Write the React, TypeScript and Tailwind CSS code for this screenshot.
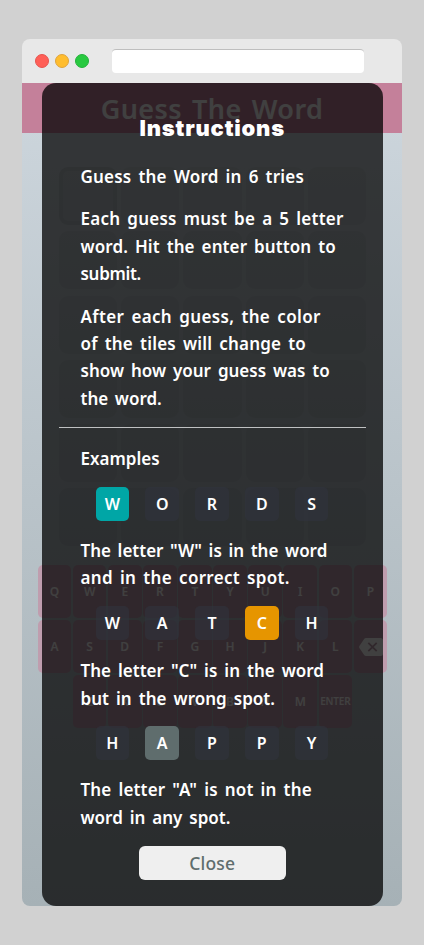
import React from 'react';

type Line = { text: string; spacing: string };

function Paragraph({ lines, className = '' }: { lines: Line[]; className?: string }) {
  return (
    <p className={`pl-[22px] text-[17px] font-semibold leading-[27.3px] text-white ${className}`}>
      {lines.map((line) => (
        <span key={line.text} className={`block whitespace-nowrap ${line.spacing}`}>
          {line.text}
        </span>
      ))}
    </p>
  );
}

function Example({ word, active, color, className = '' }: { word: string; active: number; color: string; className?: string }) {
  return (
    <div className={`ml-[37px] flex h-[34px] gap-[16px] ${className}`}>
      {word.split('').map((letter, i) => (
        <div
          key={i}
          className={`flex w-[33.8px] items-center justify-center rounded-[5px] text-[16px] font-semibold text-white ${
            i === active ? color : 'bg-[#30343d]/60'
          }`}
        >
          {letter}
        </div>
      ))}
    </div>
  );
}

function Key({ label }: { label: string }) {
  return (
    <div className="flex h-[53.3px] w-[33.6px] items-center justify-center rounded-[5px] bg-[#bf9dae] pt-px text-[12px] font-semibold text-white">
      {label === 'DEL' ? (
        <svg viewBox="0 0 24 18" className="ml-[1px] h-[18px] w-[24px] shrink-0">
          <path d="M7 0H21.5Q24 0 24 2.5V15.5Q24 18 21.5 18H7Q6 18 5.3 17.2L.4 10Q-.1 9 .4 8L5.3.8Q6 0 7 0Z" fill="#fff" />
          <path d="M9.3 4.8L17.7 13.2M17.7 4.8L9.3 13.2" stroke="#bf9dae" strokeWidth="1.8" />
        </svg>
      ) : (
        <span className={label === 'ENTER' ? 'text-[10px] tracking-[-0.2px]' : ''}>{label}</span>
      )}
    </div>
  );
}

const keyRows = ['Q W E R T Y U I O P', 'A S D F G H J K L DEL', 'Z X C V B N M ENTER'];

export default function App() {
  return (
    <div className="h-[945px] w-[424px] overflow-hidden bg-[#d1d1d1] px-[22px] pt-[39px] font-['Noto_Sans','Liberation_Sans',sans-serif]">
      <div className="flex h-[867px] w-[380px] flex-col overflow-hidden rounded-[8px]">
        <div className="flex h-[44px] shrink-0 items-center gap-[6px] bg-[#e8e8e8] pl-[13px]">
          <span className="size-[14px] rounded-full border border-[#e6544f] bg-[#ff5f57]" />
          <span className="size-[14px] rounded-full border border-[#dfa43b] bg-[#ffbd2e]" />
          <span className="size-[14px] rounded-full border border-[#24b23b] bg-[#28c940]" />
          <span className="ml-[17px] h-[24px] w-[252px] rounded-[4px] border-t border-[#bebebe] bg-white" />
        </div>

        <div className="relative flex-1 bg-linear-to-b from-[#cdd6dd] to-[#a6b1b6]">
          <h1 className="flex h-[50px] items-center justify-center bg-[#c4809a] pt-[2px] text-[27px] font-semibold text-white tracking-[0.4px] [word-spacing:2.7px]">
            Guess The Word
          </h1>
          <div className="mt-[34px] ml-[37px] grid w-[307px] grid-cols-5 gap-x-[4.2px] gap-y-[6.3px]">
            {Array.from({ length: 30 }, (_, i) => (
              <div
                key={i}
                className={`h-[58px] rounded-[9px] bg-black/4 ${i === 0 ? 'border-4 border-black/4' : ''}`}
              />
            ))}
          </div>
          <div className="mt-[18.5px] flex flex-col items-center gap-[1.5px]">
            {keyRows.map((row) => (
              <div key={row} className="ml-px flex gap-[1.5px]">
                {row.split(' ').map((key) => (
                  <Key key={key} label={key} />
                ))}
              </div>
            ))}
          </div>

          <div className="absolute inset-y-0 left-[19.5px] w-[341.5px] rounded-[14px] bg-black/75 px-[17px]">
            <h2 className="mt-[31px] h-[28px] text-center font-['Inter','Noto_Sans',sans-serif] text-[22px] leading-[28px] font-black tracking-[0.8px] text-white">
              Instructions
            </h2>
            <Paragraph
              className="mt-[20.7px]"
              lines={[{ text: 'Guess the Word in 6 tries', spacing: 'tracking-[0.2px] [word-spacing:2.4px]' }]}
            />
            <Paragraph
              className="mt-[15.5px]"
              lines={[
                { text: 'Each guess must be a 5 letter', spacing: 'tracking-[0.25px] [word-spacing:2.3px]' },
                { text: 'word. Hit the enter button to', spacing: 'tracking-[0.1px] [word-spacing:2.4px]' },
                { text: 'submit.', spacing: 'tracking-[-0.3px]' },
              ]}
            />
            <Paragraph
              className="mt-[15.5px]"
              lines={[
                { text: 'After each guess, the color', spacing: 'tracking-[0.35px] [word-spacing:2.4px]' },
                { text: 'of the tiles will change to', spacing: 'tracking-[0.2px] [word-spacing:2.4px]' },
                { text: 'show how your guess was to', spacing: '[word-spacing:2.5px]' },
                { text: 'the word.', spacing: '[word-spacing:2.2px]' },
              ]}
            />
            <hr className="mt-[14.8px] border-[#bfc1c2]" />
            <Paragraph className="mt-[17px]" lines={[{ text: 'Examples', spacing: '' }]} />
            <Example className="mt-[14.5px]" word="WORDS" active={0} color="bg-[#00a6a6]" />
            <Paragraph
              className="mt-[16.5px]"
              lines={[
                { text: 'The letter "W" is in the word', spacing: '[word-spacing:2.2px]' },
                { text: 'and in the correct spot.', spacing: 'tracking-[0.3px] [word-spacing:2.4px]' },
              ]}
            />
            <Example className="mt-[14.5px]" word="WATCH" active={3} color="bg-[#e69500]" />
            <Paragraph
              className="mt-[17px]"
              lines={[
                { text: 'The letter "C" is in the word', spacing: '[word-spacing:2.6px]' },
                { text: 'but in the wrong spot.', spacing: '[word-spacing:2.7px]' },
              ]}
            />
            <Example className="mt-[14.5px]" word="HAPPY" active={1} color="bg-[#5f6d6d]" />
            <Paragraph
              className="mt-[16px]"
              lines={[
                { text: 'The letter "A" is not in the', spacing: 'tracking-[0.15px] [word-spacing:2.5px]' },
                { text: 'word in any spot.', spacing: '[word-spacing:2.5px]' },
              ]}
            />
            <button className="mx-auto mt-[15px] block h-[34.5px] w-[147px] rounded-[6px] bg-[#efefef] text-[17.5px] font-medium tracking-[0.2px] text-[#5f6d6d]">
              Close
            </button>
          </div>
        </div>
      </div>
    </div>
  );
}
